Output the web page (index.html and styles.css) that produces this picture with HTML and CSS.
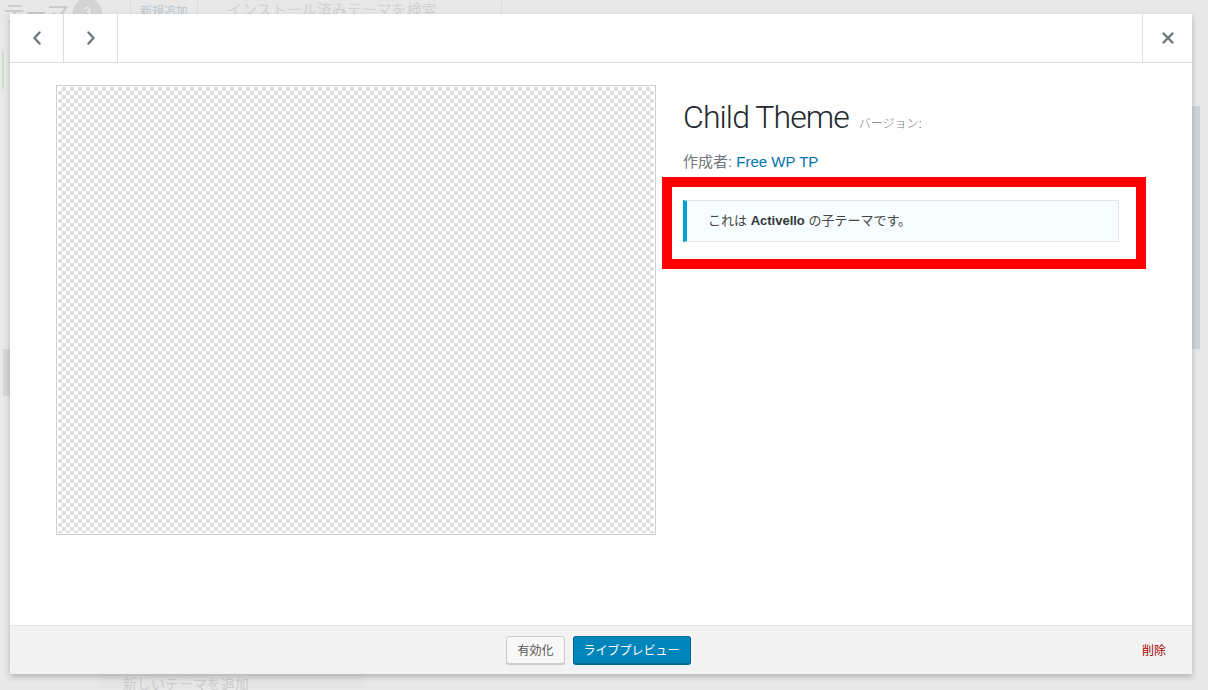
FILE: index.html
```html
<!DOCTYPE html>
<html lang="ja">
<head>
<meta charset="utf-8">
<title>Child Theme</title>
<link rel="stylesheet" href="styles.css">
</head>
<body>
<div class="page">
  <div class="page-head">
    <span class="page-title">テーマ</span>
    <span class="count">3</span>
    <span class="add-new">新規追加</span>
    <span class="search">インストール済みテーマを検索</span>
  </div>
  <div class="active-mark"></div>
  <div class="left-tab"></div>
  <div class="scrollbar"></div>
  <div class="page-foot"><span class="add-card">新しいテーマを追加</span></div>
</div>

<div class="modal">
  <div class="modal-header">
    <button class="nav-btn" aria-label="前">
      <svg width="10" height="14" viewBox="0 0 10 14"><path d="M7.5 1.5 L2.5 7 L7.5 12.5" fill="none" stroke="#72777c" stroke-width="2.4" stroke-linecap="round" stroke-linejoin="round"/></svg>
    </button>
    <button class="nav-btn" aria-label="次">
      <svg width="10" height="14" viewBox="0 0 10 14"><path d="M2.5 1.5 L7.5 7 L2.5 12.5" fill="none" stroke="#72777c" stroke-width="2.4" stroke-linecap="round" stroke-linejoin="round"/></svg>
    </button>
    <div class="header-space"></div>
    <button class="close-btn" aria-label="閉じる">
      <svg width="12" height="12" viewBox="0 0 12 12"><path d="M1.5 1.5 L10.5 10.5 M10.5 1.5 L1.5 10.5" fill="none" stroke="#72777c" stroke-width="2.4" stroke-linecap="round"/></svg>
    </button>
  </div>

  <div class="modal-body">
    <div class="screenshot"></div>
    <div class="info">
      <h2 class="theme-name">Child Theme <span class="version">バージョン:</span></h2>
      <p class="theme-author">作成者: <a href="#">Free WP TP</a></p>
      <div class="annot">
        <div class="parent-theme">これは <strong>Activello</strong> の子テーマです。</div>
      </div>
    </div>
  </div>

  <div class="modal-footer">
    <div class="footer-left"></div>
    <div class="actions">
      <button class="btn">有効化</button>
      <button class="btn btn-primary">ライブプレビュー</button>
    </div>
    <a class="delete" href="#">削除</a>
  </div>
</div>
</body>
</html>
```

FILE: styles.css
```css
* { box-sizing: border-box; }

html, body {
  margin: 0;
  padding: 0;
  width: 1208px;
  height: 690px;
  overflow: hidden;
}

body {
  background: #e8e8e8;
  font-family: "Liberation Sans", "Noto Sans CJK JP", sans-serif;
  position: relative;
}

/* ---------- faded page behind the overlay ---------- */
.page {
  width: 1208px;
  height: 690px;
  position: relative;
}

.page-head {
  display: flex;
  align-items: center;
  height: 24px;
  padding-left: 3px;
  margin-top: -1px;
}

.page-title {
  font-family: "Noto Sans CJK JP", sans-serif;
  font-size: 22px;
  line-height: 24px;
  color: #c9c9c9;
}

.count {
  width: 29px;
  height: 29px;
  border-radius: 50%;
  background: #d4d4d4;
  color: #ececec;
  font-size: 14px;
  display: flex;
  align-items: center;
  justify-content: center;
  margin-left: 4px;
  margin-top: 2px;
}

.add-new {
  margin-left: 28px;
  height: 30px;
  padding: 6px 9px 0;
  border-left: 1px solid #dadada;
  border-right: 1px solid #dadada;
  font-family: "Noto Sans CJK JP", sans-serif;
  font-size: 12px;
  color: #b9c7d1;
}

.search {
  height: 30px;
  width: 304px;
  padding: 2px 0 0 29px;
  font-family: "Noto Sans CJK JP", sans-serif;
  font-size: 15px;
  color: #d2d2d2;
  border-right: 1px solid #dadada;
}

.active-mark {
  position: absolute;
  left: 2px;
  top: 52px;
  width: 2px;
  height: 38px;
  background: #cfdccf;
}

.left-tab {
  position: absolute;
  left: 3px;
  top: 350px;
  width: 7px;
  height: 47px;
  background: #d6d6d6;
}

.scrollbar {
  position: absolute;
  left: 1192px;
  top: 107px;
  width: 8px;
  height: 243px;
  background: #d1d4d7;
}

.page-foot {
  position: absolute;
  left: 100px;
  top: 674px;
  width: 264px;
  height: 16px;
  background: #e5e5e5;
}

.add-card {
  display: block;
  padding-left: 23px;
  margin-top: 1px;
  font-family: "Noto Sans CJK JP", sans-serif;
  font-size: 14px;
  line-height: 18px;
  color: #cdcdcd;
}

/* ---------- modal ---------- */
.modal {
  position: absolute;
  left: 10px;
  top: 14px;
  width: 1182px;
  height: 660px;
  background: #fff;
  box-shadow: 0 3px 6px rgba(0, 0, 0, 0.22);
  display: flex;
  flex-direction: column;
}

.modal-header {
  display: flex;
  height: 49px;
  border-bottom: 1px solid #ddd;
  flex: none;
}

.nav-btn,
.close-btn {
  background: none;
  border: 0;
  margin: 0;
  padding: 0;
  height: 48px;
  display: flex;
  align-items: center;
  justify-content: center;
  cursor: pointer;
}

.nav-btn {
  width: 54px;
  border-right: 1px solid #ddd;
}

.header-space { flex: 1; }

.close-btn {
  width: 50px;
  border-left: 1px solid #ddd;
  padding-left: 1px;
}

.modal-body {
  flex: 1;
  display: flex;
  align-items: flex-start;
  padding: 23px 0 0 47px;
}

.screenshot {
  width: 598px;
  height: 448px;
  flex: none;
  border: 1px solid #fff;
  box-shadow: 0 0 0 1px #cfcfcf;
  background-color: #fff;
  background-image:
    linear-gradient(45deg, #dedede 25%, transparent 25%, transparent 75%, #dedede 75%),
    linear-gradient(45deg, #dedede 25%, transparent 25%, transparent 75%, #dedede 75%);
  background-size: 8px 8px;
  background-position: 0 0, 4px 4px;
}

.info {
  margin-left: 28px;
  padding-top: 10px;
}

.theme-name {
  margin: 0;
  font-family: Roboto, "Liberation Sans", sans-serif;
  font-weight: 300;
  font-size: 32px;
  line-height: 42px;
  letter-spacing: -0.9px;
  color: #23282d;
}

.version {
  font-family: "Liberation Sans", "Noto Sans CJK JP", sans-serif;
  font-size: 12px;
  letter-spacing: 0;
  color: #72777c;
  margin-left: 3px;
}

.theme-author {
  margin: 5px 0 3px;
  font-size: 15px;
  line-height: 24px;
  color: #72777c;
}

.theme-author a {
  color: #0073aa;
  text-decoration: none;
}

.annot {
  margin-left: -21px;
  width: 484px;
  border: 10px solid #ff0000;
  padding: 13px 17px 17px 11px;
}

.parent-theme {
  border: 1px solid #e5e5e5;
  border-left: 4px solid #00a0d2;
  background: #f7fcfe;
  padding: 10px 10px 10px 21px;
  font-size: 13px;
  line-height: 20px;
  color: #444;
}

.parent-theme strong {
  font-weight: 700;
  color: #32373c;
}

/* ---------- footer ---------- */
.modal-footer {
  flex: none;
  height: 49px;
  border-top: 1px solid #e3e3e3;
  background: #f2f2f2;
  display: grid;
  grid-template-columns: 1fr auto 1fr;
  align-items: start;
  padding: 10px 26px 0 26px;
}

.actions {
  display: flex;
  gap: 8px;
  margin-right: 5px;
}

.btn {
  height: 28px;
  padding: 0 10px 1px;
  font-family: "Noto Sans CJK JP", sans-serif;
  font-size: 12px;
  line-height: 26px;
  border-radius: 3px;
  border: 1px solid #ccc;
  background: #f7f7f7;
  color: #555;
  box-shadow: 0 1px 0 #ccc;
  cursor: pointer;
  white-space: nowrap;
}

.btn-primary {
  background: #0085ba;
  border-color: #0073aa #006799 #006799;
  box-shadow: 0 1px 0 #006799;
  color: #fff;
}

.delete {
  justify-self: end;
  margin-top: 4px;
  font-family: "Noto Sans CJK JP", sans-serif;
  font-size: 12px;
  line-height: 20px;
  color: #a00;
  text-decoration: none;
}
```
